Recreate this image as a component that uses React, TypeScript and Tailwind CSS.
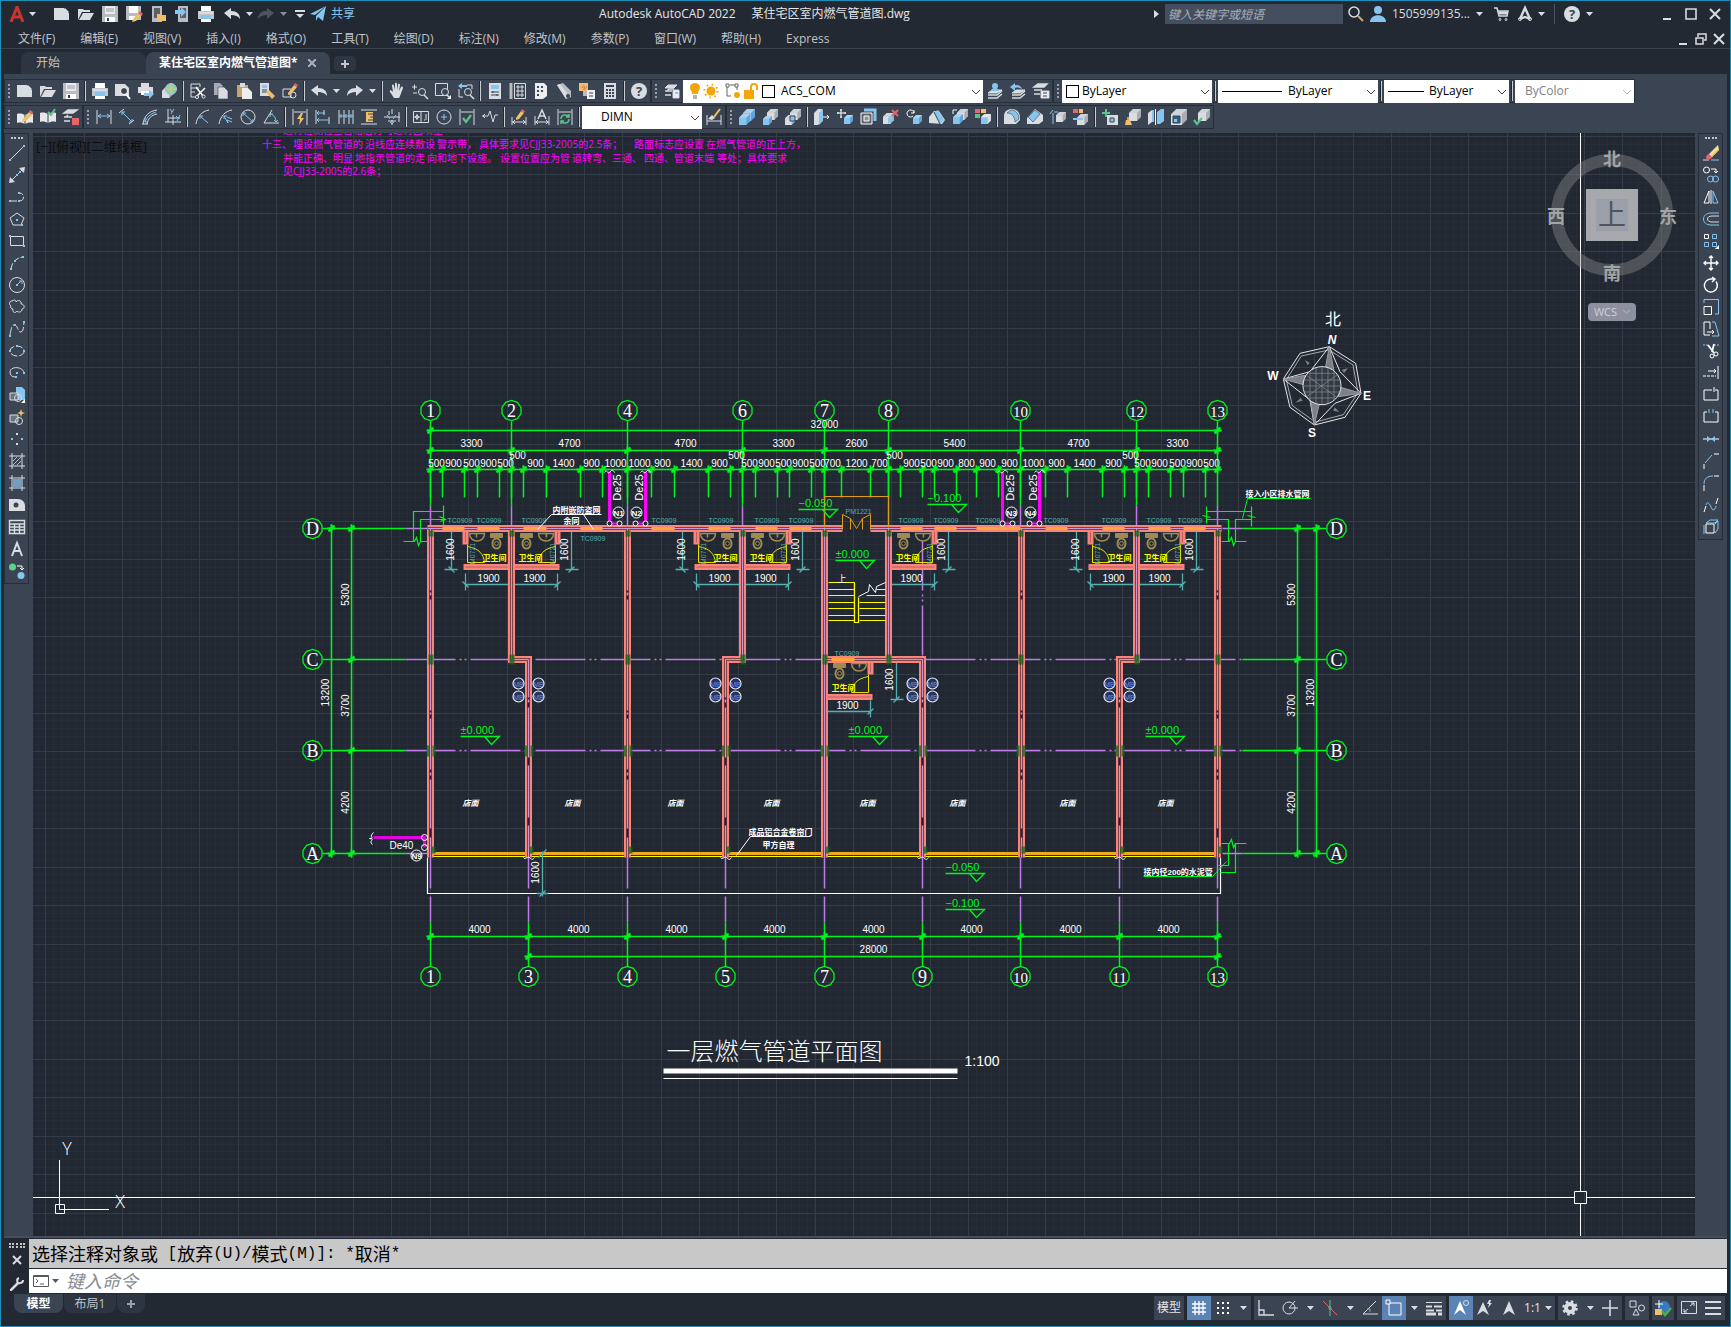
import React, { ReactNode } from "react";

const W = "#d9dce1";
const B = "#86c5f0";
const Y = "#f0c068";
const R = "#e2666c";
const G = "#5cc48a";
const D = "#3b4453";

/* ---------- icons, all on a 16 x 16 box ---------- */

const Cube = ({ x = 2, y = 2, s = 12, c = W, side = "#a9adb3" }: { x?: number; y?: number; s?: number; c?: string; side?: string }) => {
  const k = s / 3;
  return (
    <g stroke="none">
      <path d={`M${x} ${y + k}l${k} ${-k}h${s - k}v${s - k}l${-k} ${k}H${x}z`} fill={side} />
      <path d={`M${x} ${y + k}h${s - k}v${s - k}H${x}z`} fill={c} />
      <path d={`M${x} ${y + k}l${k} ${-k}h${s - k}l${-k} ${k}z`} fill="#f2f3f5" fillOpacity={0.55} />
    </g>
  );
};

const pencil = (
  <g stroke="none">
    <path d="M6 10l6-7 3 3-6 6-4 1z" fill={Y} />
    <path d="M12 3l1-2 3 2-1 3z" fill={R} />
  </g>
);

const arcDim = "M15 1C8 2 3 8 2 15";

const icons: Record<string, ReactNode> = {
  fresh: <path d="M0 2h10l5 5v7H0z M11 2l4 4h-4z" fill={W} stroke="none" />,
  open: (
    <g stroke="none" fill={W}>
      <path d="M0 14V3h5l1 1h6v2H4z" />
      <path d="M5 7h11l-4 7H1z" />
    </g>
  ),
  save: (
    <g stroke="none">
      <path d="M0 0h16v16H0z" fill="#b9bdc3" />
      <path d="M3 0h10v8H3z" fill="#e9ebee" />
      <path d="M3 11h10v5H3z" fill="#fff" />
      <path d="M5 12h2v3H5z" fill={D} />
      <path d="M4 3h8M4 5h8" stroke="#9a9ea5" />
    </g>
  ),
  saveAs: (
    <g stroke="none">
      <path d="M0 0h15v14H0z" fill="#b9bdc3" />
      <path d="M3 0h9v7H3z" fill="#fff" />
      <path d="M3 10h8v4H3z" fill="#fff" />
      <path d="M7 13l6-7 3 3-6 6-4 1z" fill={Y} />
      <path d="M12 7l2-2 3 3-2 2z" fill={R} />
    </g>
  ),
  mobileOpen: (
    <g stroke="none">
      <path d="M2 0h10v16H2z" fill="#b9bdc3" />
      <path d="M4 2h6v10H4z" fill="#5a616d" />
      <path d="M7 8h4l1 1h4v6H7z" fill={Y} />
    </g>
  ),
  mobileSave: (
    <g stroke="none">
      <path d="M4 0h10v16H4z" fill="#b9bdc3" />
      <path d="M6 2h6v10H6z" fill="#5a616d" />
      <path d="M1 4h6V1l5 5-5 5V8H1z" fill={B} />
    </g>
  ),
  print: (
    <g stroke="none">
      <path d="M3 0h10v5H3z" fill="#fff" />
      <path d="M0 5h16v8H0z" fill="#c3c7cc" />
      <path d="M1 6h14v2H1z" fill={W} />
      <path d="M3 9h10v4H3z" fill={B} />
      <path d="M3 13h10v3H3z" fill="#fff" />
    </g>
  ),
  preview: (
    <g>
      <path d="M0 1h10l4 4v8H0z" fill={W} stroke="none" />
      <circle cx="9" cy="8" r="3.5" fill={D} stroke="#fff" />
      <path d="M11 11l4 5" stroke="#fff" strokeWidth="2" />
    </g>
  ),
  plot: (
    <g stroke="none">
      <path d="M3 0h8v4H3zM0 4h15v6H0z" fill={W} />
      <path d="M3 8h9v4H3z" fill="#fff" />
      <path d="M6 10h5v-3l5 4-5 5v-3H6z" fill={B} />
    </g>
  ),
  print3d: (
    <g>
      <Cube x={1} y={4} s={11} />
      <circle cx="10" cy="6" r="5.5" fill="#8fd0b4" stroke={B} />
      <path d="M5 6h11M10 0v12" stroke="#e9c66a" />
    </g>
  ),
  cut: (
    <g>
      <path d="M1 1h9v3M1 1v13h4M1 5h8M1 9h4" />
      <path d="M6 4l7 9M15 5l-8 8" stroke="#fff" strokeWidth="1.6" />
      <circle cx="7" cy="14" r="1.6" />
      <circle cx="13.5" cy="13.5" r="1.6" />
    </g>
  ),
  copy: (
    <g stroke="none" fill={W}>
      <path d="M1 0h6l3 3v9H1z" fill="#a9adb3" />
      <path d="M5 4h6l4 4v8H5z" stroke={D} strokeWidth=".6" />
    </g>
  ),
  paste: (
    <g stroke="none">
      <path d="M1 2h11v12H1z" fill="#c8a468" />
      <path d="M4 0h5v4H4z" fill={W} />
      <path d="M6 5h6l4 4v7H6z" fill="#eceef0" />
    </g>
  ),
  match: (
    <g stroke="none">
      <path d="M1 0h9v13H1z" fill={W} />
      <path d="M3 2h5v3H3z" fill={B} />
      <path d="M3 7h5M3 9h5" stroke={D} />
      <path d="M7 9l3-2 6 6-3 3z" fill={Y} />
    </g>
  ),
  blockEdit: (
    <g>
      <path d="M1 6h8v8H1z" />
      <circle cx="11" cy="12" r="3" />
      <path d="M6 10l6-8 3 2-6 7-3 1z" fill={Y} stroke="none" />
      <path d="M12 2l1-2 3 2-1 2z" fill={R} stroke="none" />
    </g>
  ),
  undo: <path d="M0 7l7-5v3c6 0 9 3 9 8-2-3-5-4-9-4v4z" fill={W} stroke="none" />,
  redo: <path d="M16 7L9 2v3c-6 0-9 3-9 8 2-3 5-4 9-4v4z" fill={W} stroke="none" />,
  redoDim: <path d="M16 7L9 2v3c-6 0-9 3-9 8 2-3 5-4 9-4v4z" fill="#4d545f" stroke="none" />,
  pan: (
    <path
      d="M5 15L1 9c-1-2 1-2 2-1l1 1L3 3c0-2 2-2 2 0l1 4V1c0-2 2-1 2 0v6l1-5c0-2 2-1 2 0l-1 6 2-4c1-1 2 0 2 1l-3 8-1 2z"
      fill={W}
      stroke="none"
    />
  ),
  zoom: (
    <g>
      <path d="M0 4h5M2.5 1.5v5M1 10h4" />
      <circle cx="10" cy="9" r="3.5" />
      <path d="M12 12l4 4" strokeWidth="1.6" />
    </g>
  ),
  zoomWindow: (
    <g>
      <path d="M.5.5h12v12H.5z" />
      <circle cx="10" cy="9" r="3.5" fill={D} />
      <path d="M12 12l2 2" strokeWidth="1.6" />
      <path d="M16 12v4h-4z" fill="#fff" stroke="none" />
    </g>
  ),
  zoomPrev: (
    <g>
      <path d="M1 6v8h4M9 2h5v4" />
      <path d="M0 3l4-3v2h5v2H4v2z" fill={B} stroke="none" />
      <circle cx="10" cy="9" r="3.5" />
      <path d="M12 12l4 4" strokeWidth="1.6" />
    </g>
  ),
  properties: (
    <g stroke="none">
      <path d="M2 0h12v16H2z" fill={W} />
      <path d="M4 2h8v4H4z" fill={B} />
      <path d="M4 9h8M4 12h8" stroke={D} />
      <path d="M6 8v2M10 11v2" stroke={D} />
    </g>
  ),
  designCenter: (
    <g>
      <path d="M1 0v16" stroke="#b9bdc3" strokeWidth="3" />
      <path d="M4.5.5h11v15h-11z" />
      <path d="M7 3h2v2H7zM11 3h2v2h-2zM7 7h2v2H7zM11 7h2v2h-2zM7 11h2v2H7zM11 11h2v2h-2z" />
    </g>
  ),
  palettes: (
    <g stroke="none">
      <path d="M2 0h9l3 3v10l-4 3H2z" fill="#eceef0" />
      <path d="M4 3h2v2H4zM8 3h2v2H8zM4 7h2v2H4zM8 7h2v2H8zM4 11h2v2H4z" fill={D} />
    </g>
  ),
  sheets: (
    <g stroke="none">
      <path d="M1 2l6-2 8 8v6l-5 2z" fill="#b9bdc3" />
      <path d="M1 2l3-1 7 9-1 6z" fill={W} />
      <circle cx="12" cy="13" r="2" fill={D} />
    </g>
  ),
  markup: (
    <g stroke="none">
      <path d="M0 0h9v8H0z" fill={Y} />
      <path d="M3 5c2-4 3-2 2 1s3-2 3-3" stroke={R} />
      <path d="M4 8h6v5H4z" fill="#b9bdc3" />
      <path d="M8 7h8v9H8z" fill="#eceef0" />
      <path d="M10 10h4M10 13h4" stroke={D} />
    </g>
  ),
  calc: (
    <g stroke="none">
      <path d="M2 0h12v16H2z" fill={W} />
      <path d="M4 2h8v2H4zM4 6h2v2H4zM7 6h2v2H7zM10 6h2v2h-2zM4 9h2v2H4zM7 9h2v2H7zM10 9h2v2h-2zM4 12h2v2H4zM7 12h2v2H7zM10 12h2v2h-2z" fill={D} />
    </g>
  ),
  help: (
    <g stroke="none">
      <circle cx="8" cy="8" r="8" fill={W} />
      <text x="8" y="13" textAnchor="middle" className="fill-[#3b4453] text-[13px] font-bold">?</text>
    </g>
  ),
  layers: (
    <g>
      <path d="M4 2h9l-3 3H1z" fill={W} />
      <path d="M1 8h7M1 12h6M3 8l2-2h5" strokeWidth="1.6" />
      <path d="M9 7h6v8H9z" fill="#eceef0" />
      <path d="M11 9h3v2h-3z" fill={B} stroke="none" />
    </g>
  ),
  layerCurrent: (
    <g>
      <path d="M1 15h9l5-4M1 12h9l5-4" strokeWidth="1.5" />
      <path d="M5 7h10l-5 3H1z" fill={W} />
      <circle cx="8" cy="3" r="3" fill={B} stroke="none" />
      <path d="M4 8c0-4 8-4 8 0z" fill={B} stroke="none" />
    </g>
  ),
  layerPrev: (
    <g>
      <path d="M2 15h8l5-4M2 12h8l5-4" strokeWidth="1.5" />
      <path d="M6 7h9l-5 3H2z" fill={W} />
      <path d="M0 4l5-4v2c4 0 6 1 7 4-2-1-4-2-7-1v3z" fill={B} stroke="none" />
    </g>
  ),
  layerStates: (
    <g>
      <path d="M5 1h9l-3 3H1zM1 7h8M1 11h6" fill={W} strokeWidth="1.5" />
      <path d="M8 8h8v7H8z" fill="#eceef0" />
      <path d="M10 10h4M10 13h4" stroke={D} />
    </g>
  ),
  bookEdit: (
    <g stroke="none">
      <path d="M0 5c3-1 6 0 8 1 2-1 5-2 8-1v9c-3-1-6 0-8 1-2-1-5-2-8-1z" fill="#e6e8eb" />
      <path d="M8 6v9" stroke={D} />
      {pencil}
    </g>
  ),
  bookCheck: (
    <g stroke="none">
      <path d="M0 4c3-1 6 0 8 1 2-1 5-2 8-1v9c-3-1-6 0-8 1-2-1-5-2-8-1z" fill="#e6e8eb" />
      <path d="M8 5v9" stroke={D} />
      <path d="M8 3l3 3 4-6" stroke={G} strokeWidth="2" fill="none" />
    </g>
  ),
  layerErase: (
    <g>
      <path d="M5 1h9l-4 3H1zM1 8h8M1 12h6M3 8l2-2" fill={W} strokeWidth="1.5" />
      <path d="M9 9h7v7H9z" fill={R} stroke="none" />
    </g>
  ),
  dimLinear: (
    <g>
      <path d="M1 1v14M15 1v14" />
      <path d="M2 7h12M5 5L2 7l3 2M11 5l3 2-3 2" stroke={B} />
    </g>
  ),
  dimAligned: (
    <g>
      <path d="M0 4l5-4M10 15l5-4" />
      <path d="M3 3l10 10M3 6V3h3M10 13h3v-3" stroke={B} />
    </g>
  ),
  dimArc: (
    <g>
      <path d="M1 15C2 7 7 2 15 1M5 15c1-5 4-9 10-10" />
      <path d="M3 13C5 8 8 5 14 3M3 9v4h3" stroke={B} />
      <path d="M0 15h6" />
    </g>
  ),
  dimOrdinate: (
    <g>
      <path d="M3 0v13h13M8 6v10M0 13h3M3 9h12" />
      <path d="M5 0l2 3M9 0L6 5M11 7l2 2M15 6l-3 6" stroke={B} />
    </g>
  ),
  dimRadius: (
    <g>
      <path d={arcDim} />
      <path d="M14 14L6 7M6 10V7h3" stroke={B} />
    </g>
  ),
  dimJogged: (
    <g>
      <path d={arcDim} />
      <path d="M15 13l-5-2 1 3-4-7M7 10V7h3M10 8l5 2" stroke={B} />
    </g>
  ),
  dimDiameter: (
    <g>
      <circle cx="8" cy="8" r="7" />
      <path d="M3 4l10 9M3 7V4h3M10 13h3v-3" stroke={B} />
    </g>
  ),
  dimAngular: (
    <g>
      <path d="M9 1L1 14h15" />
      <path d="M7 5c4 1 6 4 6 8M7 8V5h3M11 11l2 2 2-2" stroke={B} />
    </g>
  ),
  quickDim: (
    <g>
      <path d="M1 0v16M15 0v16M2 3h12" />
      <path d="M9 4L5 10h3l-1 6 5-7H9l2-5z" fill={Y} stroke="none" />
    </g>
  ),
  baseline: (
    <g>
      <path d="M1 1v14M14 8v7M9 1v5" />
      <path d="M2 4h8M2 11h12M4 2L2 4l2 2M4 9l-2 2 2 2" stroke={B} />
    </g>
  ),
  continueDim: (
    <g>
      <path d="M1 1v14M6 1v14M11 1v14M15 1v14" />
      <path d="M1 7h14M3 5v4M8 5v4M13 5v4" stroke={B} />
    </g>
  ),
  dimSpace: (
    <g>
      <path d="M0 1h16M0 15h16" />
      <path d="M5 3h7v10H5z" fill={Y} stroke="none" />
      <path d="M7 5h5M9 8h3M7 11h5" stroke={D} />
    </g>
  ),
  dimBreak: (
    <g>
      <path d="M5 2v4M8 0v5M8 11v5M0 8h16M15 3v10M4 12h8" />
      <path d="M3 6l3 4M12 6l-3 4M6 13l2 2 2-2" stroke={B} />
    </g>
  ),
  tolerance: (
    <g>
      <path d="M.5 2.5h15v11H.5zM8 3v10" />
      <path d="M4 5v6M1 8h6" />
      <circle cx="4" cy="8" r="1.5" />
      <path d="M13 5v6M11 11h1" />
    </g>
  ),
  centerMark: (
    <g>
      <circle cx="8" cy="8" r="7" />
      <path d="M8 5v6M5 8h6" stroke={B} />
    </g>
  ),
  inspect: (
    <g>
      <path d="M1 0v16M15 0v16M2 3h12" />
      <path d="M4 9l3 4 5-7" stroke={G} strokeWidth="2.2" />
    </g>
  ),
  jogLine: <path d="M0 7h6M3 5L1 7l2 2M6 7l2-5 3 11 2-7h3" />,
  dimEdit: (
    <g>
      <path d="M1 8v8M15 8v8M1 13h14M4 11l-2 2 2 2M12 11l2 2-2 2" />
      <path d="M5 9l5-7 3 2-5 6-3 1z" fill={Y} stroke="none" />
      <path d="M10 2l1-2 3 2-1 2z" fill={R} stroke="none" />
    </g>
  ),
  dimTextEdit: (
    <g>
      <path d="M1 7v9M15 7v9M1 13h14M4 11l-2 2 2 2M12 11l2 2-2 2" />
      <path d="M4 10l4-9 4 9M5.5 7h5" strokeWidth="1.5" />
    </g>
  ),
  dimUpdate: (
    <g>
      <path d="M1 0v16M15 0v16M2 3h12" />
      <path d="M4 10c0-5 6-5 8-2M12 5v3H9M12 10c0 5-6 5-8 2M4 15v-3h3" stroke={G} strokeWidth="1.5" />
    </g>
  ),
  dimStyle: (
    <g>
      <path d="M1 6v10M15 6v10M1 12h14" />
      <path d="M8 8l6-8" stroke={Y} strokeWidth="2" />
      <path d="M2 10l4-4 3 3-3 2z" fill={W} stroke="none" />
    </g>
  ),
  union: (
    <g>
      <Cube x={4} y={0} s={12} c={B} side="#5fa5d8" />
      <Cube x={0} y={5} s={11} c={B} side="#5fa5d8" />
    </g>
  ),
  subtract: (
    <g>
      <Cube x={5} y={0} s={11} />
      <Cube x={1} y={7} s={9} c={B} side="#5fa5d8" />
    </g>
  ),
  intersect: (
    <g>
      <Cube x={5} y={0} s={11} />
      <Cube x={0} y={6} s={10} />
      <path d="M5 7h5v5H5z" fill={B} stroke={D} />
    </g>
  ),
  extrudeFace: (
    <g stroke="none">
      <path d="M0 4l4-4h4v12l-4 4H0z" fill={W} />
      <path d="M5 4l4-4v12l-4 4z" fill={B} />
      <path d="M9 8h6M13 6l2 2-2 2" stroke="#fff" />
    </g>
  ),
  moveFace: (
    <g>
      <path d="M4 0v9M0 4h9M3 1h2M3 8h2M1 3v2M8 3v2" stroke="#fff" />
      <Cube x={7} y={6} s={9} c={B} side="#5fa5d8" />
    </g>
  ),
  offsetFace: (
    <g>
      <path d="M4 1h11v11" stroke={B} strokeWidth="3" />
      <path d="M1 4h11v11H1z" stroke="#fff" fill="#5b6470" />
      <path d="M4 7h5v5H4z" stroke="#fff" fill="#8c9198" />
    </g>
  ),
  deleteFace: (
    <g>
      <Cube x={0} y={4} s={11} />
      <path d="M5 15V9l5-5v7z" fill={B} stroke="none" />
      <path d="M9 1l6 6M15 1L9 7" stroke={R} strokeWidth="2" />
    </g>
  ),
  rotateFace: (
    <g>
      <path d="M8 4a3.5 3.5 0 1 0-1 3M8 1v3H5" stroke="#fff" />
      <Cube x={7} y={6} s={9} c={B} side="#5fa5d8" />
    </g>
  ),
  taperFace: (
    <g stroke="none">
      <path d="M0 14V8l5-6h5l6 9-3 4z" fill={W} />
      <path d="M5 3l4-2 6 10-4 4z" fill={B} />
      <path d="M5 3l6 12" stroke={D} />
    </g>
  ),
  copyFace: (
    <g>
      <Cube x={5} y={0} s={11} />
      <Cube x={1} y={5} s={10} c={B} side="#5fa5d8" />
      <path d="M1 5V1h4" stroke="#fff" />
    </g>
  ),
  colorFace: (
    <g stroke="none">
      <path d="M0 0h5v4H0z" fill={R} />
      <path d="M6 0h5v4H6z" fill={Y} />
      <path d="M0 5h5v4H0z" fill={G} />
      <Cube x={6} y={5} s={10} c={B} side={W} />
    </g>
  ),
  filletEdge: (
    <g stroke="none">
      <path d="M0 15V7c0-5 4-7 8-7 5 0 8 4 8 8v3l-4 4z" fill={W} />
      <path d="M3 4c5 0 8 4 8 9l4-3c0-5-3-9-8-9z" fill={B} stroke={D} strokeWidth=".6" />
    </g>
  ),
  chamferEdge: (
    <g stroke="none">
      <path d="M0 15V9l8-9 8 6v6l-4 3z" fill={W} />
      <path d="M1 8l7-7 5 4-7 8z" fill={B} stroke={D} strokeWidth=".6" />
    </g>
  ),
  copyEdge: (
    <g>
      <Cube x={6} y={3} s={10} />
      <path d="M3 15V4M0 5l3-4M4 3h4" stroke={B} />
    </g>
  ),
  colorEdge: (
    <g stroke="none">
      <path d="M0 0h5v4H0z" fill={R} />
      <path d="M6 0h4v4H6z" fill={Y} />
      <Cube x={4} y={5} s={11} />
      <path d="M0 10h10" stroke={B} strokeWidth="2" />
    </g>
  ),
  imprint: (
    <g>
      <path d="M4 0v8M0 4h8" stroke={G} strokeWidth="2" />
      <path d="M5 6h11v10H5z" fill={W} stroke="none" />
      <path d="M8 9h4v4H8z" fill={B} stroke={D} />
    </g>
  ),
  clean: (
    <g>
      <Cube x={4} y={0} s={12} />
      <path d="M3 8v4" stroke={Y} strokeWidth="1.5" />
      <path d="M1 11h4l2 5H0z" fill={Y} stroke="none" />
    </g>
  ),
  separate: (
    <g stroke="none">
      <path d="M0 4l4-3v12l-4 3z" fill={W} />
      <path d="M4 1h2v12H4zM9 3l4-3h3v12l-4 3H9z" fill={B} />
      <path d="M7.5 0v16" stroke="#fff" />
    </g>
  ),
  shell: (
    <g>
      <Cube x={0} y={0} s={16} />
      <path d="M2 7h7v7H2z" fill="#2d5f88" stroke={D} />
      <path d="M3 10h3v3H3z" fill={B} stroke="none" />
    </g>
  ),
  checkSolid: (
    <g>
      <Cube x={4} y={0} s={12} />
      <path d="M0 11l3 4 5-6" stroke={G} strokeWidth="2.2" />
    </g>
  ),
  line: (
    <g>
      <path d="M1 15L15 1" />
      <path d="M0 14h2v2H0zM14 0h2v2h-2z" fill={B} stroke="none" />
    </g>
  ),
  xline: (
    <g>
      <path d="M2 14L14 2" />
      <path d="M0 16l1-6 5 5zM16 0l-6 1 5 5z" fill={W} stroke="none" />
      <path d="M7 7h2v2H7zM10 4h2v2h-2z" fill={B} stroke="none" />
    </g>
  ),
  pline: (
    <g>
      <path d="M1 12h9c6 0 6-7 1-8" strokeDasharray="7 2" />
      <path d="M0 11h2v2H0zM9 11h2v2H9zM9 3h2v2H9z" fill={B} stroke="none" />
    </g>
  ),
  polygon: (
    <g>
      <path d="M8 2l7 5-3 7H4L1 7z" />
      <path d="M7 8h2v2H7zM12 13h2v2h-2z" fill={B} stroke="none" />
    </g>
  ),
  rectangle: (
    <g>
      <path d="M1.5 3.5h13v9h-13z" />
      <path d="M0 2h2v2H0zM14 12h2v2h-2z" fill={B} stroke="none" />
    </g>
  ),
  arc: (
    <g>
      <path d="M2 14C3 7 7 3 14 2" strokeDasharray="6 2" />
      <path d="M1 13h2v2H1zM5 5h2v2H5zM13 1h2v2h-2z" fill={B} stroke="none" />
    </g>
  ),
  circle: (
    <g>
      <circle cx="8" cy="8" r="7.5" />
      <path d="M8 8l4-4M10 4h3v3" stroke={B} />
      <path d="M7 7h2v2H7z" fill={B} stroke="none" />
    </g>
  ),
  revcloud: <path d="M2 7C-1 5 1 1 4 2c1-2 3-1 3 1 2-3 6-1 5 2 4 0 4 5 1 5 0 3-3 4-5 2-2 3-5 1-4-2-2 0-3-2-2-3z" />,
  spline: (
    <g>
      <path d="M1 14C2 8 3 3 6 4s3 8 6 7 2-5 3-9" strokeDasharray="8 2" />
      <path d="M0 14h2v2H0zM5 3h2v2H5zM14 0h2v2h-2z" fill={B} stroke="none" />
    </g>
  ),
  ellipse: (
    <g>
      <ellipse cx="8" cy="8" rx="7" ry="5" strokeDasharray="7 2" />
      <path d="M0 7h2v2H0zM14 7h2v2h-2zM7 2h2v2H7z" fill={B} stroke="none" />
    </g>
  ),
  ellipseArc: (
    <g>
      <path d="M15 8C14 1 1 1 1 7c0 3 2 5 5 5" />
      <path d="M7 7h2v2H7zM14 7h2v2h-2zM6 11h2v2H6z" fill={B} stroke="none" />
    </g>
  ),
  insertBlock: (
    <g>
      <path d="M7 0h6l3 3v10H7z" fill={B} stroke="none" />
      <path d="M1 6h8v7H1z" fill="#6b727d" />
      <circle cx="9" cy="11" r="3.5" />
      <path d="M16 12v4h-4z" fill="#fff" stroke="none" />
    </g>
  ),
  makeBlock: (
    <g>
      <path d="M1 6h8v7H1z" fill="#6b727d" />
      <circle cx="10" cy="12" r="3.5" />
      <path d="M12 0l1 3 3 1-3 1-1 3-1-3-3-1 3-1z" fill={Y} stroke="none" />
    </g>
  ),
  point: (
    <g fill={W} stroke="none">
      <path d="M7 2h2v2H7zM7 12h2v2H7z" />
      <path d="M2 7h2v2H2zM12 7h2v2h-2z" fill={B} />
    </g>
  ),
  hatch: (
    <g>
      <path d="M3 0v16M13 0v16M0 3h16M0 13h16" />
      <path d="M4 8l4-4M4 12l8-8M8 12l4-4" stroke={B} />
    </g>
  ),
  gradient: (
    <g>
      <path d="M4 4h8v8H4z" fill={B} fillOpacity={0.7} stroke="none" />
      <path d="M3 0v16M13 0v16M0 3h16M0 13h16" />
    </g>
  ),
  region: (
    <g stroke="none">
      <path d="M0 2h9c4 0 7 3 7 7v5H0z" fill={W} />
      <circle cx="7" cy="8" r="2.5" fill={D} />
    </g>
  ),
  table: <path d="M.5 1.5h15v13H.5zM0 5h16M0 8h16M0 11h16M5.5 5v10M10.5 5v10" strokeWidth="1.4" />,
  mtext: <path d="M3 15L8 2l5 13M5 10h6" strokeWidth="2" />,
  addSelected: (
    <g stroke="none">
      <circle cx="3.5" cy="4" r="3.5" fill="#5ed08c" />
      <circle cx="12" cy="12.5" r="3.5" fill={B} />
      <path d="M8 3h5v3M11 5l2 2 2-2" stroke="#fff" fill="none" />
    </g>
  ),
  erase: (
    <g stroke="none">
      <path d="M0 15h6" stroke={W} />
      <path d="M8 15h8" stroke={B} />
      <path d="M6 9l9-9 1 5-8 8z" fill="#f4dfa0" />
      <path d="M8 11l8-8v2l-8 8z" fill={Y} />
      <path d="M3 13c0-3 2-4 3-4l3 3c-1 3-5 3-6 1z" fill={R} />
    </g>
  ),
  copyObj: (
    <g>
      <circle cx="3.5" cy="3" r="3" stroke="#fff" />
      <path d="M8 2h5v4M11 4l2 2 2-2" stroke="#fff" />
      <circle cx="7.5" cy="12" r="3" stroke={B} />
      <circle cx="12.5" cy="12" r="3" stroke={B} />
    </g>
  ),
  mirror: (
    <g>
      <path d="M6 2v12H1zM8 1v14" stroke="#fff" />
      <path d="M10 2v12h5z" stroke={B} />
    </g>
  ),
  offset: (
    <g>
      <path d="M16 2H8C-2 2-2 14 8 14h8" stroke={B} />
      <path d="M16 5H9C3 5 3 11 9 11h7" />
    </g>
  ),
  array: (
    <g>
      <path d="M1.5 1.5h4v4h-4z" stroke="#fff" />
      <path d="M9.5 1.5h4v4h-4zM1.5 9.5h4v4h-4zM9.5 9.5h4v4h-4z" stroke={B} />
      <path d="M16 12v4h-4z" fill="#fff" stroke="none" />
    </g>
  ),
  move: <path d="M8 1v14M1 8h14M6 3l2-2 2 2M6 13l2 2 2-2M3 6L1 8l2 2M13 6l2 2-2 2" stroke="#fff" strokeWidth="1.4" />,
  rotate: <path d="M13 4.5A6.5 6.5 0 1 1 8 2h3M9 0l3 2-3 3" stroke="#fff" strokeWidth="1.4" />,
  scale: (
    <g>
      <path d="M1 4V.5h14.5v14.5H12" stroke={B} />
      <path d="M1 7.5h7.5v8H1z" stroke="#fff" />
    </g>
  ),
  stretch: (
    <g>
      <path d="M7 14H1V1h6v7" stroke="#fff" />
      <path d="M9 1h3l4 14H9" stroke={B} />
      <path d="M4 11h7M9 9l2 2-2 2" stroke="#fff" />
    </g>
  ),
  trim: (
    <g>
      <path d="M0 2h5M11 2h5" stroke={B} strokeDasharray="2 1" />
      <path d="M5 2l6 8M11 1L9 9" stroke="#fff" strokeWidth="1.8" />
      <circle cx="9" cy="13" r="2" stroke="#fff" />
      <circle cx="13" cy="11" r="2" stroke="#fff" />
    </g>
  ),
  extend: (
    <g stroke="#fff">
      <path d="M5 6h8M11 4l2 2-2 2M15 1v13" />
      <path d="M0 11h13" strokeDasharray="3 1" />
    </g>
  ),
  breakPoint: <path d="M9 3H1v10h14V3h-3M11 0v5" stroke="#fff" />,
  breakGap: (
    <g>
      <path d="M4 3H1v10h14V3h-3" stroke="#fff" />
      <path d="M6 0v4M10 0v4" stroke={B} />
    </g>
  ),
  join: (
    <g>
      <path d="M0 8h16" stroke="#fff" />
      <path d="M4 5l4 3-4 3zM12 5L8 8l4 3z" fill={B} stroke="none" />
    </g>
  ),
  chamfer: (
    <g>
      <path d="M1 16v-5M11 1h5" stroke="#fff" />
      <path d="M2 10l7-8" stroke={B} />
    </g>
  ),
  fillet: (
    <g>
      <path d="M1 16v-6M11 1h5" stroke="#fff" />
      <path d="M1 9c0-5 3-8 9-8" stroke={B} />
    </g>
  ),
  blend: (
    <g>
      <path d="M1 15l2-6M13 7l2-6" stroke="#fff" />
      <path d="M3 8c2-6 5 2 6 4s4 0 4-3" stroke={B} />
    </g>
  ),
  explode: (
    <g>
      <path d="M3 5h8v9H3z" stroke="#fff" />
      <path d="M3 4l4-3h8l-3 3zM12 5l3-3v8l-3 4M1 6v9" stroke={B} />
    </g>
  ),
  grid: <path d="M4 1v14M8 1v14M12 1v14M1 4h14M1 8h14M1 12h14" stroke="#fff" strokeWidth="1.3" />,
  snap: <path d="M2 3h13M2 8h13M2 13h13" stroke="#fff" strokeWidth="2" strokeDasharray="2 3" />,
  ortho: <path d="M1 0v15h15M1 10h5v5" strokeWidth="1.3" />,
  polar: (
    <g>
      <circle cx="7" cy="8" r="6" />
      <path d="M7 8h9M7 8l6-7" />
    </g>
  ),
  isoplane: (
    <g>
      <path d="M8 0v16" stroke={G} />
      <path d="M1 1l14 14" stroke={R} />
      <path d="M7 7h2v2H7z" fill={D} stroke={G} />
    </g>
  ),
  otrack: (
    <g>
      <path d="M14 1L1 14h15" />
      <path d="M5 9h3v3" stroke={G} />
    </g>
  ),
  osnap: (
    <g stroke="#fff">
      <path d="M3 3h12v12H3z" />
      <path d="M0 0h4v4H0z" fill="#5b84b5" />
    </g>
  ),
  lineweight: (
    <g>
      <path d="M0 2.5h16" />
      <path d="M0 6.5h6M8 6.5h8M0 10.500h8M10 10.500h6" strokeWidth="2" />
      <path d="M0 14h10M12 14h4" strokeWidth="3" />
    </g>
  ),
  annoVis: (
    <g stroke="none">
      <path d="M7 1l6 14-6-5-6 5z" fill="#fff" />
      <circle cx="13" cy="3" r="2.5" stroke={W} />
    </g>
  ),
  annoAuto: <path d="M6 2l6 13-6-4-6 4zM12 0l-2 4h2l-1 4 4-5h-2l1-3z" fill={W} stroke="none" />,
  anno: <path d="M8 1l6 14-6-4-6 4z" fill={W} stroke="none" />,
  gear: (
    <g>
      <circle cx="8" cy="8" r="4" strokeWidth="4" />
      <circle cx="8" cy="8" r="6.5" strokeWidth="2.5" strokeDasharray="2.6 2.5" />
    </g>
  ),
  plus: <path d="M8 0v16M0 8h16" strokeWidth="1.6" />,
  isolate: (
    <g>
      <path d="M1 1h6v6H1z" />
      <circle cx="12.5" cy="8" r="3" />
      <path d="M7 9l3 6H4z" />
    </g>
  ),
  hardware: (
    <g stroke="none">
      <circle cx="9" cy="7" r="6" fill="#3a78c2" />
      <path d="M4 0v8M0 4h8" stroke="#fff" />
      <path d="M0 9h7v6H0z" fill={Y} />
      <path d="M7 11l3 4 6-7" stroke="#4caf50" strokeWidth="2.4" fill="none" />
    </g>
  ),
  fullscreen: <path d="M.5 1.5h15v12H.5zM9 6l4-3M10 3h3v3M7 9l-4 3M3 9v3h3" />,
  menu: <path d="M0 2h16M0 8h16M0 14h16" strokeWidth="1.8" />,
  search: (
    <g>
      <circle cx="6" cy="6" r="5" strokeWidth="1.5" />
      <path d="M10 10l5 5" strokeWidth="2" stroke="#c8a878" />
    </g>
  ),
  user: (
    <g stroke="none" fill={B}>
      <circle cx="8" cy="4" r="4" />
      <path d="M0 16c0-9 16-9 16 0z" />
    </g>
  ),
  cart: (
    <g>
      <path d="M1 2h3l2 8h8l1-5H5" strokeWidth="1.5" />
      <path d="M6 7h8" strokeWidth="3" />
      <circle cx="7" cy="13.5" r="1" />
      <circle cx="13" cy="13.5" r="1" />
    </g>
  ),
  autodesk: (
    <g>
      <path d="M3 13L8 2l5 11M3 13l5-2 5 2" strokeWidth="2.4" />
      <circle cx="3" cy="13" r="1.5" />
      <circle cx="13" cy="13" r="1.5" />
    </g>
  ),
  share: (
    <g stroke="none" fill={B}>
      <path d="M0 8L16 0 5 9z" />
      <path d="M16 0l-3 15-5-4-2 4V10z" />
    </g>
  ),
  customize: (
    <g stroke="none" fill={W}>
      <path d="M3 4h10v2H3zM4 8h8l-4 4z" />
    </g>
  ),
};

const Icon = ({ name, className = "" }: { name: string; className?: string }) => (
  <svg width="16" height="16" viewBox="0 0 16 16" fill="none" stroke={W} className={"shrink-0 overflow-visible " + className} aria-hidden="true">
    {icons[name]}
  </svg>
);

const Caret = ({ className = "text-[#d9dce1]" }: { className?: string }) => (
  <svg width="7" height="4" viewBox="0 0 7 4" className={"shrink-0 " + className} aria-hidden="true">
    <path d="M0 0h7L3.5 4z" fill="currentColor" />
  </svg>
);

/* ---------- chrome ---------- */

const menus = ["文件(F)", "编辑(E)", "视图(V)", "插入(I)", "格式(O)", "工具(T)", "绘图(D)", "标注(N)", "修改(M)", "参数(P)", "窗口(W)", "帮助(H)", "Express"];
const quick = ["fresh", "open", "save", "saveAs", "mobileOpen", "mobileSave", "print"];

const WinButtons = ({ inner }: { inner?: boolean }) => (
  <div className={inner ? "flex items-center gap-[2px] pr-[3px]" : "flex items-center gap-2 pr-[7px]"}>
    <button aria-label="最小化" className="flex w-4 justify-center">
      <svg width="10" height="12" viewBox="0 0 10 12" stroke={W} strokeWidth="2"><path d="M1 11h8" /></svg>
    </button>
    <button aria-label="还原" className="flex w-4 justify-center">
      <svg width="12" height="12" viewBox="0 0 12 12" stroke={W} fill="none" strokeWidth={inner ? 1.5 : 1.6}>
        <path d={inner ? "M3 4V1h8v6H9M1 5h7v6H1z" : "M1 1h10v10H1z"} />
      </svg>
    </button>
    <button aria-label="关闭" className="flex w-4 justify-center">
      <svg width="12" height="12" viewBox="0 0 12 12" stroke={W} strokeWidth="2"><path d="M1 1l10 10M11 1L1 11" /></svg>
    </button>
  </div>
);

const TitleBar = () => (
  <header className="flex h-[26px] shrink-0 items-center justify-between">
    <div className="flex items-center pl-[8px]">
      <button aria-label="应用程序菜单" className="flex w-[41px] items-center gap-1">
        <svg width="16" height="16" viewBox="0 0 16 16" fill="none" stroke="#c8342f" strokeWidth="3" aria-hidden="true">
          <path d="M2 16L8 1l6 15M4 11h8" />
        </svg>
        <Caret />
      </button>
      {quick.map((n) => (
        <button key={n} aria-label={n} className="flex w-6 justify-center">
          <Icon name={n} />
        </button>
      ))}
      <button aria-label="undo" className="flex w-[36px] items-center justify-center gap-[6px] pl-1"><Icon name="undo" /><Caret /></button>
      <button aria-label="redo" className="flex w-[36px] items-center justify-center gap-[6px]"><Icon name="redoDim" /><Caret className="text-[#8a909a]" /></button>
      <button aria-label="customize" className="flex w-5 justify-center"><Icon name="customize" /></button>
      <button className="flex items-center gap-[5px] text-xs text-[#86c5f0]"><Icon name="share" />共享</button>
    </div>
    <h1 className="flex gap-4 text-xs text-[#e4e6ea]">
      <span>Autodesk AutoCAD 2022</span>
      <span>某住宅区室内燃气管道图.dwg</span>
    </h1>
    <div className="flex items-center justify-end">
      <svg width="5" height="8" viewBox="0 0 5 8" className="mr-[6px]"><path d="M0 0l5 4-5 4z" fill={W} /></svg>
      <input aria-label="搜索" placeholder="键入关键字或短语" className="h-5 w-[178px] bg-[#454e5f] px-[3px] text-xs italic outline-none placeholder:text-[#aab0ba]" />
      <button aria-label="search" className="ml-[3px] flex w-5 justify-center"><Icon name="search" /></button>
      <button className="ml-1 flex items-center gap-[6px] text-xs text-[#d9dce1]"><Icon name="user" />1505999135...<Caret /></button>
      <button aria-label="cart" className="ml-[10px]"><Icon name="cart" /></button>
      <button aria-label="autodesk" className="ml-2 flex items-center gap-[5px]"><Icon name="autodesk" /><Caret /></button>
      <span className="mx-[9px] h-5 w-px bg-[#4b5361]" />
      <button aria-label="help" className="mr-[66px] flex items-center gap-[6px]"><Icon name="help" /><Caret /></button>
      <WinButtons />
    </div>
  </header>
);

const MenuBar = () => (
  <nav className="flex h-[22px] shrink-0 items-center justify-between border-b border-[#3c4450] pl-[17px] pt-[2px]">
    <div className="flex gap-[25px] text-xs text-[#c0c4cb]">
      {menus.map((m) => (
        <button key={m}>{m}</button>
      ))}
    </div>
    <WinButtons inner />
  </nav>
);

const FileTabs = () => (
  <div className="flex h-[25px] shrink-0 items-end pl-[20px] text-xs">
    <button className="h-[22px] w-[125px] rounded-t-lg bg-[#2d3541] pl-[15px] text-left text-[#c0c4cb]">开始</button>
    <div className="flex h-[22px] w-[184px] items-center gap-[10px] rounded-t-lg bg-[#3b4453] pl-[13px] font-bold text-white">
      <button>某住宅区室内燃气管道图*</button>
      <button aria-label="关闭标签">
        <svg width="8" height="8" viewBox="0 0 8 8" stroke="#aab0ba" strokeWidth="2"><path d="M0 0l8 8M8 0L0 8" /></svg>
      </button>
    </div>
    <button aria-label="新标签" className="mb-[3px] ml-[4px] flex h-[15px] w-[22px] items-center justify-center rounded bg-[#2d3541]">
      <svg width="8" height="8" viewBox="0 0 8 8" stroke="#c0c4cb" strokeWidth="2"><path d="M4 0v8M0 4h8" /></svg>
    </button>
  </div>
);

const Grip = () => (
  <span className="flex h-full w-2 shrink-0 items-center justify-center gap-px py-1">
    <span className="h-full border-l-2 border-dotted border-[#9aa1ac]" />
  </span>
);

const Sep = () => <span className="mx-[2px] h-[20px] w-[2px] shrink-0 border-l border-r border-l-[#222831] border-r-[#c8ccd2]" />;

const Bar = ({ children }: { children: ReactNode }) => (
  <div role="toolbar" className="flex h-6 shrink-0 items-center border border-[#272e38]">
    <Grip />
    {children}
  </div>
);

/* "|" draws a separator, a trailing "*" adds a drop-down arrow */
const Tools = ({ names }: { names: string }) => (
  <>
    {names.split(" ").map((n, i) => {
      if (n === "|") return <Sep key={i} />;
      const name = n.replace("*", "");
      return (
        <button key={i} aria-label={name} className="flex h-full shrink-0 items-center">
          <span className="flex w-[23px] justify-center">
            <Icon name={name} />
          </span>
          {n.endsWith("*") && <span className="flex w-[13px] justify-center"><Caret /></span>}
        </button>
      );
    })}
  </>
);

interface IComboProps {
  label: string;
  value: string;
  width: string;
  pad: string;
  disabled?: boolean;
  children?: ReactNode;
}

const Combo = ({ label, value, width, pad, disabled, children }: IComboProps) => (
  <div className={"relative h-[23px] shrink-0 bg-white text-xs " + width + (disabled ? " text-[#7d8187]" : " text-black")}>
    <select aria-label={label} disabled={disabled} className={"h-full w-full appearance-none bg-transparent outline-none " + pad}>
      <option>{value}</option>
    </select>
    <span className="pointer-events-none absolute inset-y-0 left-1 flex items-center gap-[2px]">{children}</span>
    <svg width="8" height="6" viewBox="0 0 8 6" fill="none" stroke={disabled ? "#b5b8bc" : "#444"} className="pointer-events-none absolute right-[3px] top-[9px]">
      <path d="M0 1l4 4 4-4" />
    </svg>
  </div>
);

const Swatch = () => <span className="block h-[13px] w-[13px] shrink-0 border border-black bg-white" />;

const Toolbars = () => (
  <div className="mx-[3px] flex h-[59px] shrink-0 flex-col gap-[2px] overflow-hidden bg-[#3b4453] pt-[5px]">
    <div className="flex">
      <Bar>
        <Tools names="fresh open save | print preview plot print3d | cut copy paste match blockEdit | undo* redo* | pan zoom zoomWindow zoomPrev | properties designCenter palettes sheets markup calc | help" />
      </Bar>
      <Bar>
        <Tools names="layers" />
        <Combo label="图层" value="ACS_COM" width="w-[300px]" pad="pl-[98px]">
          <svg width="73" height="18" viewBox="0 0 73 18" fill="none" stroke="#666">
            <path d="M8 1c6 0 6 6 3 9v2H5v-2C2 7 2 1 8 1z" fill="#f5a50a" stroke="none" />
            <path d="M6 14h4M6 16h4" />
            <circle cx="24" cy="9" r="4.5" fill="#f5a50a" stroke="none" />
            <circle cx="24" cy="9" r="6.5" stroke="#f5a50a" strokeWidth="2" strokeDasharray="1.5 3.6" />
            <path d="M40 5v9M43 3h5M40 14h4M50 5v3M39 2h3v3h-3zM48 2h3v3h-3z" />
            <circle cx="50" cy="13" r="3" fill="#f5a50a" stroke="none" />
            <path d="M57 8h10v9H57z" fill="#f5a50a" stroke="none" />
            <path d="M64 8V5c0-4 6-4 6 0v3" stroke="#f5a50a" strokeWidth="2" />
          </svg>
          <Swatch />
        </Combo>
        <Tools names="layerCurrent layerPrev layerStates" />
      </Bar>
      <Bar>
        <Combo label="颜色" value="ByLayer" width="w-[150px]" pad="pl-[20px]">
          <Swatch />
        </Combo>
        <Sep />
        <Combo label="线型" value="ByLayer" width="w-[160px]" pad="pl-[70px]">
          <span className="h-px w-[60px] bg-black" />
        </Combo>
        <Sep />
        <Combo label="线宽" value="ByLayer" width="w-[125px]" pad="pl-[45px]">
          <span className="h-px w-[36px] bg-black" />
        </Combo>
        <Sep />
        <Combo label="打印样式" value="ByColor" width="w-[119px]" pad="pl-[10px]" disabled />
      </Bar>
    </div>
    <div className="flex">
      <Bar>
        <Tools names="bookEdit bookCheck layerErase" />
      </Bar>
      <Bar>
        <Tools names="dimLinear dimAligned dimArc dimOrdinate | dimRadius dimJogged dimDiameter dimAngular | quickDim baseline continueDim dimSpace dimBreak | tolerance centerMark inspect jogLine | dimEdit dimTextEdit dimUpdate |" />
        <Combo label="标注样式" value="DIMN" width="w-[120px]" pad="pl-[19px]" />
        <Tools names="dimStyle" />
      </Bar>
      <Bar>
        <Tools names="union subtract intersect | extrudeFace moveFace offsetFace deleteFace rotateFace taperFace copyFace colorFace | filletEdge chamferEdge copyEdge colorEdge | imprint clean separate shell checkSolid" />
      </Bar>
    </div>
  </div>
);

const SideBar = ({ names, className }: { names: string; className: string }) => (
  <aside className={"shrink-0 bg-[#3b4453] " + className}>
    <div role="toolbar" className="flex w-[25px] flex-col items-center border border-[#272e38] pb-[1px]">
      <span className="mb-[3px] mt-[3px] w-3 border-t-2 border-dotted border-[#c0c4cb]" />
      {names.split(" ").map((n) => (
        <button key={n} aria-label={n} className="flex h-[22px] items-center">
          <Icon name={n} />
        </button>
      ))}
    </div>
  </aside>
);

/* ---------- drawing ---------- */

const PX = 0.0246; // screen pixels per millimetre
const X0 = 430;
const px = (mm: number) => Math.round(X0 + mm * PX);

const GREEN = "#00f51c";
const TEAL = "#56b0b0";
const PURPLE = "#bf7ce8";
const PINK = "#fa837c";

const topAxes: [string, number][] = [["1", 0], ["2", 3300], ["4", 8000], ["6", 12700], ["7", 16000], ["8", 18600], ["10", 24000], ["12", 28700], ["13", 32000]];
const bottomAxes: [string, number][] = [["1", 0], ["3", 4000], ["4", 8000], ["5", 12000], ["7", 16000], ["9", 20000], ["10", 24000], ["11", 28000], ["13", 32000]];
const rows: [string, number][] = [["D", 528], ["C", 659], ["B", 750], ["A", 853]];

const details = [
  500, 900, 500, 900, 500, 500, 900, 1400, 900, 1000, 1000, 900, 1400, 900, 500, 500, 900, 500, 900, 500, 700, 1200, 700,
  500, 900, 500, 900, 800, 900, 900, 1000, 900, 1400, 900, 500, 500, 900, 500, 900, 500,
];
const raised = [5, 14, 23, 34];

let run = 0;
const segments = details.map((len, i) => {
  const from = run;
  run += len;
  return { len, from, to: run, up: raised.includes(i) };
});

const gridPath = (step: number, x: number, y: number) => {
  let d = "";
  for (let i = 0; x + i * step < 4000; i++) d += `M${Math.round(x + i * step)}.5 0V3000`;
  for (let i = 0; y + i * step < 2400; i++) d += `M0 ${Math.round(y + i * step)}.5H4000`;
  return d;
};

interface ITextProps {
  x: number;
  y: number;
  children: ReactNode;
  size?: string;
  fill?: string;
  mid?: boolean;
  up?: boolean;
}

const T = ({ x, y, children, size = "text-[10px]", fill = "#fff", mid, up }: ITextProps) => (
  <text x={x} y={y} fill={fill} stroke="none" textAnchor={mid || up ? "middle" : "start"} className={size} transform={up ? `rotate(-90 ${x} ${y})` : undefined}>
    {children}
  </text>
);

const Bubble = ({ x, y, label }: { x: number; y: number; label: string }) => {
  const pts = Array.from({ length: 10 }, (_, i) => {
    const a = (Math.PI * (2 * i + 1)) / 10;
    return `${(x + 10 * Math.cos(a)).toFixed(1)},${(y + 10 * Math.sin(a)).toFixed(1)}`;
  });
  return (
    <g>
      <polygon points={pts.join(" ")} fill="none" stroke={GREEN} strokeWidth="1.3" />
      <text x={x} y={y + 6} fill="#fff" textAnchor="middle" className={"font-[Liberation_Serif] " + (label.length > 1 ? "text-[15px]" : "text-[18px]")}>
        {label}
      </text>
    </g>
  );
};

const Tick = ({ x, y }: { x: number; y: number }) => <path d={`M${x - 3} ${y + 3}l6-6M${x - 4} ${y}h8M${x} ${y - 4}v8`} stroke={GREEN} strokeWidth="1.8" />;

const Level = ({ x, y, v }: { x: number; y: number; v: string }) => (
  <g>
    <T x={x} y={y - 3} size="text-[11px]" fill={GREEN}>{v}</T>
    <path d={`M${x} ${y}h39l-8 8-7-8`} stroke={GREEN} strokeWidth="1.3" fill="none" />
  </g>
);

/* dir mirrors the room about its axis; `far` moves the dimension lines for the room behind the stairs */
const Bath = ({ x, y, dir, far }: { x: number; y: number; dir: 1 | -1; far?: boolean }) => {
  const dx = far ? 12 : 0;
  const dy = far ? -3 : 0;
  return (
    <g>
      <g transform={`translate(${x} ${y}) scale(${dir} 1)`} fill="none">
        <path d="M0 37.5h48M46 0v15" stroke={PINK} strokeWidth="6" />
        <path d="M2 37.5h44M46 1v12" stroke="#b8605c" />
        <path d="M44 15v18H27c1-8 5-14 17-16" stroke="#e6e000" />
        <g stroke="#a08a50">
          <path d="M9 4h12v4H9z" fill="#a08a50" />
          <ellipse cx="15" cy="14" rx="4" ry="5" strokeWidth="2" />
          <circle cx="15" cy="14" r="2" />
          <path d="M27 4h15c0 10-15 10-15 0zM35 4v4" strokeWidth="1.5" />
        </g>
        <path d={`M0 ${55 + dy}h46M46 ${44 + dy}v17M43 ${58 + dy}l6-6`} stroke={TEAL} strokeWidth="1.3" />
        <path d={`M${60 + dx} 0v41M${54 + dx} 40h13M${57 + dx} 43l6-6`} stroke={TEAL} strokeWidth="1.3" />
      </g>
      {!far && <T x={x + dir * 40 + 3} y={y + 24} size="text-[7px]" fill={TEAL} up>M0721</T>}
      <T x={x + (dir > 0 ? 19 : -17)} y={y + 31} size="text-[8px] font-bold" fill="#ffff00" mid>卫生间</T>
      <T x={x + dir * 23} y={y + 52 + dy} mid>1900</T>
      <T x={x + (dir > 0 ? 56 : -58) + dx} y={y + 20} up>1600</T>
    </g>
  );
};

const Meters = ({ x }: { x: number }) => (
  <g>
    {[-10, 10].map((dx) =>
      [683, 696].map((y) => (
        <g key={`${dx}${y}`}>
          <circle cx={x + dx} cy={y} r="5.5" fill="#27345a" stroke="#eef0ff" strokeWidth="1.2" />
          <T x={x + dx} y={y + 3} size="text-[7px]" fill="#6f8fe0" mid>MB</T>
        </g>
      )),
    )}
  </g>
);

const Riser = ({ x, dir, label }: { x: number; dir: 1 | -1; label: string }) => (
  <g fill="none">
    <path d={`M${x} 471V523`} stroke="#ff00ff" strokeWidth="3" />
    <path d={`M${x} 523h${dir * 9}`} stroke="#ff00ff" strokeWidth="2" />
    <circle cx={x} cy="523" r="2.5" stroke="#fff" fill="#212831" />
    <circle cx={x + dir * 10} cy="523" r="2.5" stroke="#fff" fill="#212831" />
    <path d={`M${x - 5} 472c3-4 3 2 5 0s3-4 5 0`} stroke="#fff" />
    <circle cx={x + dir * 9} cy="512" r="5.5" stroke="#fff" />
    <T x={x + dir * 9} y={515} size="text-[8px] font-bold" mid>{label}</T>
    <T x={x + (dir > 0 ? 11 : -3)} y={487} size="text-[11px]" up>De25</T>
  </g>
);

const walls = [
  "M427 528H842M870 528H1221",
  "M430 528V857",
  "M511 528V659H528V857",
  "M627 528V857",
  "M742 528V659H725V857",
  "M824 528V857",
  "M888 528V659M824 659H922V857",
  "M1021 528V857",
  "M1136 528V659H1119V857",
  "M1217 528V857",
].join("");

const windows: [number, number][] = [
  [447, 522], [476, 522], [521, 522], [580, 540], [651, 522], [708, 522], [754, 522], [788, 522],
  [898, 522], [933, 522], [975, 522], [1043, 522], [1101, 522], [1146, 522], [1177, 522], [834, 655],
];

const FloorPlan = () => (
  <g fill="none" strokeWidth="1" className="font-['Liberation_Sans','Noto_Sans_CJK_SC',sans-serif]" transform="translate(.5 .5)">
    {/* axes and dimension strings */}
    <g strokeWidth="1.5">
      <path d="M405 659H1242M405 750H1242" stroke={PURPLE} strokeDasharray="50 4 2 3 2 4" />
      <path d="M405 528H427M1222 528H1242M405 853H427M1222 853H1242M922 540V659" stroke={PURPLE} strokeDasharray="50 4 2 3 2 4" />
      {rows.map(([r, y]) => (
        <path key={r} d={`M322 ${y}H405M1242 ${y}H1326`} stroke={GREEN} />
      ))}
      {topAxes.map(([n, mm]) => (
        <g key={n}>
          <path d={`M${px(mm)} 421V505`} stroke={GREEN} />
          <path d={`M${px(mm)} 505V527`} stroke={PURPLE} />
        </g>
      ))}
      {bottomAxes.map(([n, mm]) => (
        <g key={n}>
          <path d={`M${px(mm)} 857V888M${px(mm)} 896V922`} stroke={PURPLE} />
          <path d={`M${px(mm)} 922V966`} stroke={GREEN} />
        </g>
      ))}
      <path d="M427 430H1221M427 450H1221M427 469H1221M427 936H1221M526 956H1221" stroke={GREEN} />
      <path d="M331 524V857M351 524V857M1297 524V857M1316 524V857" stroke={GREEN} />
      {segments.map((s) => (
        <path key={s.from} d={`M${px(s.from)} 465V497`} stroke={GREEN} />
      ))}
      <path d="M427 857V893H1220V857" stroke="#fff" strokeWidth="1.2" />
    </g>

    {topAxes.map(([n, mm]) => (
      <g key={n}>
        <Bubble x={px(mm)} y={410} label={n} />
        <Tick x={px(mm)} y={450} />
      </g>
    ))}
    {bottomAxes.map(([n, mm]) => (
      <g key={n}>
        <Bubble x={px(mm)} y={976} label={n} />
        <Tick x={px(mm)} y={936} />
      </g>
    ))}
    {rows.map(([r, y]) => (
      <g key={r}>
        <Bubble x={312} y={y} label={r} />
        <Bubble x={1336} y={y} label={r} />
        <Tick x={351} y={y} />
        <Tick x={1297} y={y} />
      </g>
    ))}
    {segments.map((s) => (
      <g key={s.from}>
        <Tick x={px(s.from)} y={469} />
        <T x={px((s.from + s.to) / 2)} y={s.up ? 458 : 466} mid>{s.len}</T>
      </g>
    ))}
    {[[430, 430], [1217, 430], [528, 956], [1217, 956], [1217, 469], [331, 528], [331, 853], [1316, 528], [1316, 853]].map(([x, y]) => (
      <Tick key={`${x}-${y}`} x={x} y={y} />
    ))}
    {topAxes.slice(1).map(([n, mm], i) => (
      <T key={n} x={px((mm + topAxes[i][1]) / 2)} y={446} mid>{mm - topAxes[i][1]}</T>
    ))}
    {bottomAxes.slice(1).map(([n, mm], i) => (
      <T key={n} x={px((mm + bottomAxes[i][1]) / 2)} y={932} mid>4000</T>
    ))}
    <T x={824} y={427} mid>32000</T>
    <T x={873} y={952} mid>28000</T>
    {[348, 1294].map((x) => (
      <g key={x}>
        <T x={x} y={594} up>5300</T>
        <T x={x} y={705} up>3700</T>
        <T x={x} y={802} up>4200</T>
      </g>
    ))}
    <T x={328} y={692} up>13200</T>
    <T x={1313} y={692} up>13200</T>

    {/* shop front */}
    <path d="M432 853H1215" stroke="#f0a81c" strokeWidth="3" />
    <path d="M432 856H1215" stroke="#ffff00" />

    {/* bathrooms */}
    <Bath x={511} y={529} dir={-1} />
    <Bath x={511} y={529} dir={1} />
    <Bath x={742} y={529} dir={-1} />
    <Bath x={742} y={529} dir={1} />
    <Bath x={888} y={529} dir={1} />
    <Bath x={1136} y={529} dir={-1} />
    <Bath x={1136} y={529} dir={1} />
    <Bath x={824} y={659} dir={1} far />

    {/* walls */}
    <path d={walls} stroke={PINK} strokeWidth="7" />
    <path d={walls} stroke="#7c4246" strokeWidth="3" />
    <path d={walls} stroke="#c79ad6" strokeWidth="1" />
    {segments.filter((s) => s.len === 900).map((s) => (
      <path key={s.from} d={`M${px(s.from)} 528H${px(s.to)}`} stroke="#ffa53a" strokeWidth="3" />
    ))}
    <path d="M831 659H854" stroke="#ffa53a" strokeWidth="3" />
    <g stroke="#2a1c3a" strokeWidth="2">
      {[430, 627, 1021, 1217].map((x) => (
        <path key={x} d={`M${x} 590v2M${x} 595v4M${x} 710v2M${x} 714v4M${x} 769v3M${x} 775v4M${x} 828v9`} />
      ))}
      {[528, 725, 922, 1119].map((x) => (
        <path key={x} d={`M${x} 697v2M${x} 702v5M${x} 757v8M${x} 817v8`} />
      ))}
    </g>
    <g fill="#0c6a14" fillOpacity="0.75">
      {bottomAxes.map(([n, mm]) => (
        <path key={n} d={`M${px(mm) + 2} 745h3v11h-3zM${px(mm) - 4} 745h3v11h-3zM${px(mm) + 1} 846h4v7h-4z`} />
      ))}
      {topAxes.map(([n, mm]) => (
        <path key={n} d={`M${px(mm) - 2} 530h5v6h-5zM${px(mm) - 2} 654h5v10h-5z`} />
      ))}
    </g>

    {/* entrance porch and stairs */}
    <path d="M824 527V496H888V527" stroke="#e09a1c" />
    <path d="M842 529V514L850 518L856 528L862 518L870 514V529M850 518V529M862 518V529" stroke="#e09a1c" />
    <g stroke="#ffff00" strokeWidth="1.2">
      <path d="M828 582H854M828 589H854M828 595H854M828 602H854M828 608H854M828 615H854M828 620H854" />
      <path d="M876 589H885M866 595H885M859 602H885M859 608H885M859 615H885M859 620H885" />
      <path d="M854 582V622H858V597" />
    </g>
    <path d="M858 596L868 591L869 584L875 592L876 586L885 582" stroke="#fff" />
    <T x={837} y={581} size="text-[9px]">上</T>

    <Meters x={528} />
    <Meters x={725} />
    <Meters x={922} />
    <Meters x={1119} />

    <Level x={460} y={736} v="±0.000" />
    <Level x={848} y={736} v="±0.000" />
    <Level x={1145} y={736} v="±0.000" />
    <Level x={835} y={560} v="±0.000" />
    <Level x={798} y={509} v="−0.050" />
    <Level x={927} y={504} v="−0.100" />
    <Level x={945} y={873} v="−0.050" />
    <Level x={945} y={909} v="−0.100" />

    {windows.map(([x, y]) => (
      <T key={x} x={x} y={y} size="text-[7px]" fill={TEAL}>TC0909</T>
    ))}
    <T x={845} y={513} size="text-[7px]" fill={TEAL}>PM1221</T>

    {/* gas pipes */}
    <Riser x={609} dir={1} label="N1" />
    <Riser x={645} dir={-1} label="N2" />
    <Riser x={1002} dir={1} label="N3" />
    <Riser x={1039} dir={-1} label="N4" />
    <path d="M373 837H424V847" stroke="#e000e0" strokeWidth="3" />
    <path d="M373 832c-6 6 3 5-4 6c7 1-2 2 3 6" stroke="#fff" />
    <circle cx="424" cy="837" r="3" stroke="#fff" />
    <circle cx="424" cy="847" r="3" stroke="#fff" />
    <circle cx="416" cy="855" r="5.5" stroke="#fff" />
    <T x={416} y={858} size="text-[8px] font-bold" mid>N9</T>
    <T x={389} y={848}>De40</T>

    {/* leaders and notes */}
    <path d="M601 514H551L537 529M583 514L593 529" stroke="#fff" />
    <T x={552} y={512} size="text-[8px] font-bold">内附嵌防盗网</T>
    <T x={563} y={523} size="text-[8px] font-bold">余同</T>
    <path d="M810 836H750L736 855" stroke="#fff" />
    <T x={748} y={834} size="text-[8px] font-bold">成品铝合金卷帘门</T>
    <T x={762} y={847} size="text-[8px] font-bold">甲方自理</T>
    <path d="M1310 498H1247L1242 518" stroke={GREEN} />
    <T x={1245} y={496} size="text-[8px] font-bold">接入小区排水管网</T>
    <path d="M1143 876H1212L1226 861" stroke={GREEN} />
    <T x={1143} y={874} size="text-[8px] font-bold">接内径200的水泥管</T>
    {[470, 572, 675, 771, 867, 957, 1067, 1165].map((x) => (
      <T key={x} x={x} y={805} size="text-[8px] font-bold italic" mid>店面</T>
    ))}
    <path d="M542 851V896M538 857l8-8M536 893h12M539 896l6-6" stroke={TEAL} strokeWidth="1.3" />
    <T x={538} y={872} up>1600</T>
    <path d="M523 857c2 3 4-2 6 0s3 3 5 0M720 857c2 3 4-2 6 0s3 3 5 0M917 857c2 3 4-2 6 0s3 3 5 0M1114 857c2 3 4-2 6 0s3 3 5 0" stroke="#fff" />

    {/* drains */}
    <g stroke={GREEN} strokeWidth="1.2">
      <path d="M443 505V525M413 541V511H443M420 541V519H443M439 516l6 3-5 2M403 541H414l2-4 2 8 2-4H427" />
      <path d="M1206 506V523M1251 506V526M1206 511H1251M1206 519H1228V541M1235 541V519H1251M1221 541H1229l2-4 2 8 2-4H1246M1202 515l8 2M1247 515l8 2" />
      <path d="M1221 843H1229l2-4 2 8 2-4H1246M1228 843V865H1218M1235 843V872H1220" />
    </g>

    {/* sheet title */}
    <T x={666} y={1059} size="text-2xl font-light">一层燃气管道平面图</T>
    <path d="M663 1068H957V1073H663z" fill="#fff" />
    <path d="M663 1078H957" stroke="#fff" />
    <T x={964} y={1065} size="text-sm">1:100</T>
  </g>
);

const Compass = () => (
  <g className="font-['Liberation_Sans','Noto_Sans_CJK_SC',sans-serif]">
    <g transform="translate(1260 300) scale(.3333)" fill="none" stroke="#e8e8ea" strokeWidth="3">
      <path d="M208 140L287 190L303 280L255 352L163 375L90 322L70 237L120 160z" />
      <path d="M207 150L279 195L294 278L250 344L166 366L97 317L79 239L124 168z" strokeWidth="2" />
      <path d="M135 180l14 8-6 8zM264 205l-18 4 6 10zM238 336l-14-14-4 10zM106 308l16-14 6 8z" fill="#7c8087" stroke="none" />
      <path d="M208 140L240 215L303 280L225 310L163 375L150 300L70 237L150 215z" />
      <path d="M208 140L222 212L196 205zM303 280L235 290L242 262zM163 375L152 300L178 312zM70 237L136 226L130 254z" fill="#7c8087" stroke="#9a9da3" />
      <circle cx="186" cy="257" r="57" fill="#333a43" />
      <path
        d="M132 240h108M130 258h114M134 276h106M146 294h80M146 220h80M150 214v86M168 204v108M186 202v112M204 204v108M222 214v86M140 226l90 66M140 290l92-66"
        stroke="#8b8f96"
        strokeWidth="2"
      />
    </g>
    <T x={1333} y={325} size="text-base" mid>北</T>
    <T x={1332} y={344} size="text-xs italic font-bold" mid>N</T>
    <T x={1273} y={380} size="text-xs font-bold" mid>W</T>
    <T x={1367} y={400} size="text-xs font-bold" mid>E</T>
    <T x={1312} y={437} size="text-xs font-bold" mid>S</T>
  </g>
);

const Notes = () => (
  <g fill="#ff00ff" className="text-[10px]">
    <text x={283} y={134}>进行检测检查合格后方可进行回填土</text>
    <text y={148}>
      <tspan x={262}>十三、</tspan>
      <tspan x={293}>埋设燃气管道的</tspan>
      <tspan x={365}>沿线应连续敷设</tspan>
      <tspan x={437}>警示带，</tspan>
      <tspan x={479}>具体要求见CJJ33-2005的2.5条；</tspan>
      <tspan x={634}>路面标志应设置</tspan>
      <tspan x={706}>在燃气管道的正上方，</tspan>
    </text>
    <text y={162}>
      <tspan x={283}>并能正确、明显</tspan>
      <tspan x={355}>地指示管道的走</tspan>
      <tspan x={427}>向和地下设施。</tspan>
      <tspan x={500}>设置位置应为管</tspan>
      <tspan x={572}>道转弯、三通、</tspan>
      <tspan x={644}>四通、管道末端</tspan>
      <tspan x={717}>等处；具体要求</tspan>
    </text>
    <text x={283} y={175}>见CJJ33-2005的2.6条；</text>
  </g>
);

const ViewCube = () => (
  <div className="absolute right-[18px] top-[12px] flex w-[130px] flex-col items-center gap-[16px]">
    <svg width="130" height="142" viewBox="0 0 130 142" className="text-[18px]" aria-label="ViewCube">
      <circle cx="65" cy="70" r="55" fill="none" stroke="#8a8c8e" strokeOpacity="0.42" strokeWidth="12" />
      <path d="M39 44H91V96H39z" fill="#a6a8ab" />
      <path d="M49 54H81V86H49z" fill="#9aa0aa" />
      <g fill="#a2a4a6" textAnchor="middle" className="font-bold">
        <text x="65" y="21">北</text>
        <text x="9" y="78">西</text>
        <text x="121" y="78">东</text>
        <text x="65" y="135">南</text>
      </g>
      <text x="65" y="80" fill="#50555d" textAnchor="middle" className="text-[28px]">上</text>
    </svg>
    <button className="flex h-[18px] w-12 items-center justify-center gap-[6px] rounded bg-[#8d909e] text-[11px] text-[#d0d2da]">
      WCS
      <svg width="7" height="4" viewBox="0 0 7 4" fill="none" stroke="#b4b7c2"><path d="M0 0l3.5 3L7 0" /></svg>
    </button>
  </div>
);

const Canvas = () => (
  <main className="relative min-w-0 flex-1 overflow-hidden bg-[#212831]">
    <svg className="absolute inset-0 h-full w-full" aria-label="一层燃气管道平面图">
      <g transform="translate(-33 -133)">
        <path d={gridPath(7.692, 37.6, 135.9)} stroke="#262d38" shapeRendering="crispEdges" />
        <path d={gridPath(38.46, 45.3, 135.9)} stroke="#343c48" shapeRendering="crispEdges" />
        <Notes />
        <text x={36} y={151} fill="#0b0d10" className="text-[13px]">[−][俯视][二维线框]</text>
        <FloorPlan />
        <Compass />
        {/* UCS icon */}
        <path d="M59.5 1160V1209.5H109M55.5 1204.5h9v9h-9z" stroke="#fff" fill="none" />
        <T x={67} y={1155} size="text-lg font-light" mid>Y</T>
        <T x={120} y={1208} size="text-lg font-light" mid>X</T>
        {/* crosshair */}
        <path d="M33 1197.5H1574M1587 1197.5H1695M1580.5 133V1191M1580.5 1204V1236M1574.5 1191.5h12v12h-12z" stroke="#fff" fill="none" />
      </g>
    </svg>
    <ViewCube />
  </main>
);

/* ---------- bottom ---------- */

const Mono = ({ children }: { children: ReactNode }) => <span className="font-[Liberation_Mono] text-base">{children}</span>;

const CommandLine = () => (
  <div className="mx-[3px] flex h-[56px] shrink-0 bg-[#222933] pt-[1px]">
    <div className="flex w-[25px] flex-col items-center gap-[7px] pt-[4px]">
      <span className="h-[5px] w-4 border-y-2 border-dotted border-[#c0c4cb]" />
      <button aria-label="关闭" className="flex">
        <svg width="10" height="10" viewBox="0 0 10 10" stroke={W} strokeWidth="2"><path d="M1 1l8 8M9 1L1 9" /></svg>
      </button>
      <button aria-label="自定义" className="mt-[5px] flex">
        <svg width="14" height="14" viewBox="0 0 14 14" stroke={W} fill="none"><path d="M0 14l8-8" strokeWidth="2.5" /><path d="M9 1c-3 1-2 6 1 5 2 0 3-1 3-3" strokeWidth="2" /></svg>
      </button>
    </div>
    <div className="flex min-w-0 flex-1 flex-col gap-px">
      <output className="flex h-[29px] items-center whitespace-pre bg-[#c8c8c8] pl-[3px] text-lg text-black">
        选择注释对象或
        <Mono> [</Mono>放弃<Mono>(U)/</Mono>模式<Mono>(M)]: *</Mono>取消<Mono>*</Mono>
      </output>
      <div className="flex h-6 items-center bg-white pl-[4px]">
        <svg width="16" height="12" viewBox="0 0 16 12" fill="none" stroke="#55595f">
          <path d="M.5.5h15v11H.5zM0 1.5h16M3 4l2 2-2 2M7 9h4" />
        </svg>
        <span className="mx-[3px]"><Caret className="text-[#55595f]" /></span>
        <input aria-label="命令" placeholder="键入命令" className="h-full min-w-0 flex-1 bg-transparent pl-1 text-lg italic outline-none placeholder:text-[#8a8d91]" />
      </div>
    </div>
  </div>
);

const Cell = ({ name, on, caret, className = "w-6" }: { name: string; on?: boolean; caret?: string; className?: string }) => (
  <>
    <button aria-label={name} className={"flex h-6 items-center justify-center " + className + (on ? " bg-[#5b84b5]" : " bg-[#3b4453]")}>
      <Icon name={name} />
    </button>
    {caret && <button aria-label={name + " 选项"} className={"flex h-6 items-center justify-center bg-[#3b4453] " + caret}><Caret /></button>}
  </>
);

const StatusBar = () => (
  <footer className="flex h-8 shrink-0 items-start justify-between pl-[13px] pr-[5px] text-xs">
    <div className="flex gap-px">
      <button className="h-[19px] w-[49px] rounded-b-lg bg-[#3b4453] font-bold text-white">模型</button>
      <button className="h-[19px] w-[52px] rounded-b-lg bg-[#2d3541] text-[#c0c4cb]">布局1</button>
      <button aria-label="新布局" className="flex h-[19px] w-[28px] items-center justify-center rounded-b-lg bg-[#2d3541]">
        <svg width="8" height="8" viewBox="0 0 8 8" stroke="#9aa1ac" strokeWidth="2"><path d="M4 0v8M0 4h8" /></svg>
      </button>
    </div>
    <div className="flex gap-[3px] pt-[2px] text-[#e4e6ea]">
      <button className="h-6 w-[30px] bg-[#3b4453]">模型</button>
      <div className="flex">
        <Cell name="grid" on />
        <Cell name="snap" caret="w-4" />
      </div>
      <div className="flex">
        <Cell name="ortho" />
        <Cell name="polar" caret="w-4" />
        <Cell name="isoplane" caret="w-4" />
        <Cell name="otrack" />
        <Cell name="osnap" on caret="w-4" />
        <Cell name="lineweight" />
      </div>
      <div className="flex">
        <Cell name="annoVis" on />
        <Cell name="annoAuto" />
        <Cell name="anno" />
        <button className="flex h-6 w-[34px] items-center justify-center gap-1 bg-[#3b4453]">1:1<Caret /></button>
      </div>
      <div className="flex">
        <Cell name="gear" caret="w-4" />
        <Cell name="plus" />
      </div>
      <Cell name="isolate" />
      <Cell name="hardware" className="w-[22px]" />
      <div className="flex">
        <Cell name="fullscreen" />
        <Cell name="menu" />
      </div>
    </div>
  </footer>
);

export default function App() {
  return (
    <div className="flex h-screen flex-col overflow-hidden border border-[#1e8fb8] bg-[#222933] font-['Open_Sans','Noto_Sans_CJK_SC',sans-serif]">
      <TitleBar />
      <MenuBar />
      <FileTabs />
      <Toolbars />
      <div className="mx-[3px] flex min-h-0 flex-1 border-b-2 border-[#464e5b]">
        <SideBar
          className="w-[29px]"
          names="line xline pline polygon rectangle arc circle revcloud spline ellipse ellipseArc insertBlock makeBlock point hatch gradient region table mtext addSelected"
        />
        <Canvas />
        <SideBar
          className="w-[32px] pl-[3px]"
          names="erase copyObj mirror offset array move rotate scale stretch trim extend breakPoint breakGap join chamfer fillet blend explode"
        />
      </div>
      <CommandLine />
      <StatusBar />
    </div>
  );
}
